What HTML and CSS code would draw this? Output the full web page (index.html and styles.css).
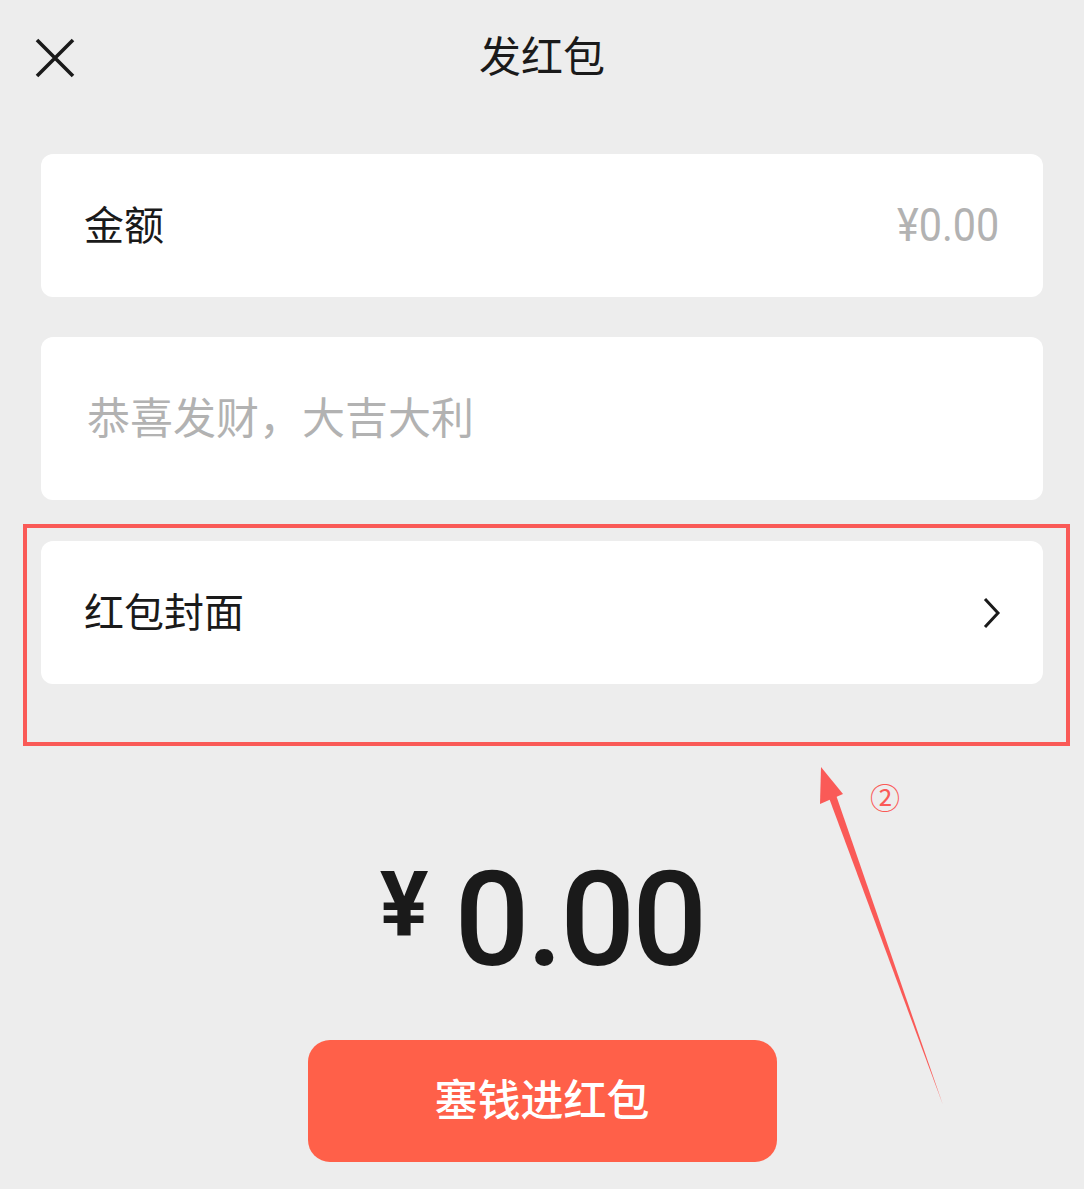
FILE: index.html
```html
<!DOCTYPE html>
<html lang="zh-CN">
<head>
  <meta charset="UTF-8">
  <meta name="viewport" content="width=device-width, initial-scale=1.0">
  <title>发红包</title>
  <link rel="stylesheet" href="styles.css">
</head>
<body>
  <div class="page">
    <!-- 顶部标题栏 -->
    <header class="topbar">
      <button class="close" aria-label="关闭">
        <svg width="40" height="40" viewBox="0 0 40 40">
          <path d="M2 2 L38 38 M38 2 L2 38" stroke="#1a1a1a" stroke-width="3.6" fill="none"/>
        </svg>
      </button>
      <h1>发红包</h1>
    </header>

    <!-- 表单 -->
    <section class="form">
      <div class="card row">
        <span class="label">金额</span>
        <span class="value">¥0.00</span>
      </div>
      <div class="card note">
        <span class="placeholder">恭喜发财，大吉大利</span>
      </div>
      <div class="card row cover">
        <span class="label">红包封面</span>
        <svg class="chevron" width="20" height="32" viewBox="0 0 20 32">
          <path d="M3 2 L16 16 L3 30" stroke="#1a1a1a" stroke-width="3" fill="none"/>
        </svg>
      </div>
    </section>

    <!-- 金额显示 -->
    <div class="total">
      <span class="yen">¥</span>
      <span class="num">0.00</span>
    </div>

    <button class="submit">塞钱进红包</button>

    <!-- 标注 -->
    <div class="mark"></div>
    <svg class="arrow" width="1084" height="1189" viewBox="0 0 1084 1189">
      <polygon points="821,767 820,804 843,794" fill="#fa5a57"/>
      <polygon points="829,798 836,795 943,1105" fill="#fa5a57"/>
    </svg>
    <span class="step">②</span>
  </div>
</body>
</html>
```

FILE: styles.css
```css
/* 基本布局 */
body {
  margin: 0;
  background-color: #ededed;
  font-family: "Noto Sans CJK SC", "Noto Sans", sans-serif;
  color: #1a1a1a;
}

.page {
  position: relative;
  width: 1084px;
  height: 1189px;
  overflow: hidden;
}

/* 标题栏 */
.topbar {
  height: 110px;
  display: flex;
  align-items: center;
  justify-content: center;
  position: relative;
}

.topbar h1 {
  margin: 0 0 2px 0;
  font-size: 42px;
  font-weight: 400;
  line-height: 1;
}

.close {
  position: absolute;
  left: 35px;
  top: 38px;
  padding: 0;
  border: none;
  background: none;
  width: 40px;
  height: 40px;
}

.close svg {
  display: block;
}

/* 表单卡片 */
.form {
  margin: 44px 41px 0;
  display: flex;
  flex-direction: column;
  gap: 40px;
}

.card {
  background-color: #fff;
  border-radius: 12px;
}

.row {
  height: 143px;
  box-sizing: border-box;
  display: flex;
  align-items: center;
  justify-content: space-between;
  padding: 0 44px 6px 43px;
}

.label {
  font-size: 40px;
  line-height: 1;
}

.value {
  font-family: Roboto, "Noto Sans", sans-serif;
  font-size: 47px;
  color: #b2b2b2;
  transform: scaleX(0.88);
  transform-origin: right center;
  line-height: 1;
  margin-top: 4px;
}

.note {
  height: 163px;
  box-sizing: border-box;
  display: flex;
  align-items: center;
  padding: 0 0 6px 46px;
}

.placeholder {
  font-size: 43px;
  color: #b2b2b2;
  line-height: 1;
}

.cover {
  margin-top: 1px;
}

.chevron {
  display: block;
  margin: 6px -3px 0 0;
}

/* 金额显示 */
.total {
  margin-top: 170px;
  display: flex;
  justify-content: center;
  align-items: flex-start;
  gap: 26px;
  font-family: Roboto, "Noto Sans", sans-serif;
}

.yen {
  font-size: 91px;
  font-weight: 700;
  line-height: 1;
  margin-top: 6px;
}

.num {
  font-size: 132px;
  font-weight: 500;
  line-height: 1;
  letter-spacing: -3px;
}

/* 按钮 */
.submit {
  display: block;
  margin: 54px auto 0;
  width: 469px;
  height: 122px;
  padding: 0 0 8px;
  border: none;
  border-radius: 22px;
  background-color: #ff6049;
  color: #fff;
  font-family: "Noto Sans CJK SC", sans-serif;
  font-size: 43px;
  font-weight: 500;
}

/* 标注框和箭头 */
.mark {
  position: absolute;
  left: 23px;
  top: 524px;
  width: 1039px;
  height: 214px;
  border: 4px solid #fa5a57;
}

.arrow {
  position: absolute;
  left: 0;
  top: 0;
}

.step {
  position: absolute;
  left: 870px;
  top: 778px;
  font-size: 30px;
  color: #fa5a57;
  line-height: 1.2;
}
```
